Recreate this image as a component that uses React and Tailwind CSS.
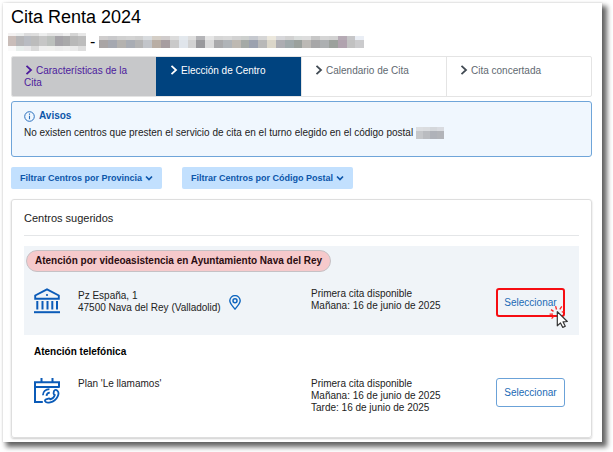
import clsx from 'clsx';

const STEPS = [
	{ label: 'Características de la Cita', state: 'visited' },
	{ label: 'Elección de Centro', state: 'current' },
	{ label: 'Calendario de Cita', state: 'pending' },
	{ label: 'Cita concertada', state: 'pending' },
];

const FILTERS = ['Filtrar Centros por Provincia', 'Filtrar Centros por Código Postal'];

// Pixelated personal data, one colour per block
const NIF_BLOCKS = [
	{
		height: 'h-[3px]',
		colors: ['bg-[#f3f1f1]', 'bg-[#eceeee]', 'bg-[#dcdcdd]', 'bg-[#dedede]', 'bg-[#edeeee]', 'bg-[#e3e3e3]', 'bg-[#e4e4e5]', 'bg-[#eeeeee]', 'bg-[#d5d5d5]', 'bg-[#e7e7e7]'],
	},
	{
		height: 'h-[10px]',
		colors: ['bg-[#c9bdb9]', 'bg-[#b6b6b8]', 'bg-[#b9bcc2]', 'bg-[#bcbcbc]', 'bg-[#c6c6c6]', 'bg-[#bcc0bd]', 'bg-[#a5a3a8]', 'bg-[#a9a9aa]', 'bg-[#b8b8b8]', 'bg-[#bdbdbd]'],
	},
	{
		height: 'h-[5px]',
		colors: ['bg-[#fafafa]', 'bg-[#e8eeec]', 'bg-[#e9e9ea]', 'bg-[#dadada]', 'bg-[#efefef]', 'bg-[#f0f0ee]', 'bg-[#ececec]', 'bg-[#efefef]', 'bg-[#eaeaea]', 'bg-[#dedede]'],
	},
];

const NAME_BLOCKS = [
	{
		height: 'h-1',
		colors: [
			'bg-[#cfcdcd]', 'bg-[#c9c9cb]', 'bg-[#d0d0d0]', 'bg-[#d3d3d3]', 'bg-[#cfcfcf]', 'bg-[#d8dbde]', 'bg-[#d4cec6]', 'bg-[#d0cccc]', 'bg-[#dcdcdc]', 'bg-[#e3e8ed]', 'bg-[#dedede]',
			'bg-[#b5b5b8]', 'bg-[#e6e6e6]', 'bg-[#d6d6d6]', 'bg-[#d9d9d9]', 'bg-[#d2d2d2]', 'bg-[#cdd0ce]', 'bg-[#c6c9cf]', 'bg-[#d6d6d6]', 'bg-[#ece8dd]', 'bg-[#d7d7da]', 'bg-[#d1d1d1]',
			'bg-[#dadddc]', 'bg-[#dddddd]', 'bg-[#c7c7c7]', 'bg-[#d5d5d5]', 'bg-[#d2d2d2]', 'bg-[#b6abb5]', 'bg-[#c6c6c8]', 'bg-[#eaeef5]',
		],
	},
	{
		height: 'h-2',
		colors: [
			'bg-[#a9a5a5]', 'bg-[#a5a8b0]', 'bg-[#b4b2af]', 'bg-[#a9adb4]', 'bg-[#b4b4b4]', 'bg-[#c2c5ca]', 'bg-[#b9aea5]', 'bg-[#a79da0]', 'bg-[#c9c9c9]', 'bg-[#e0e5eb]', 'bg-[#d2d2d2]',
			'bg-[#99999c]', 'bg-[#dadada]', 'bg-[#a9a9ab]', 'bg-[#b0b4b8]', 'bg-[#beb9b2]', 'bg-[#a5aaa6]', 'bg-[#9ba1af]', 'bg-[#b8b8b8]', 'bg-[#dbd6c9]', 'bg-[#adadb2]', 'bg-[#a0a9ab]',
			'bg-[#9ba19d]', 'bg-[#bcb9b5]', 'bg-[#a7a7a8]', 'bg-[#adb0b2]', 'bg-[#9ca19d]', 'bg-[#b0a2ae]', 'bg-[#c1c1c1]', 'bg-[#cbcbcd]',
		],
	},
];

const POSTCODE_BLOCKS = [
	{ height: 'h-1', colors: ['bg-[#dcdee1]', 'bg-[#dadcdf]', 'bg-[#d4d7db]', 'bg-[#d9dbe0]'] },
	{ height: 'h-2', colors: ['bg-[#c5c7ca]', 'bg-[#babcc0]', 'bg-[#afb2b9]', 'bg-[#b2b4b9]'] },
];

function Mosaic({ rows, className }) {
	return (
		<span aria-hidden="true" className={clsx('inline-flex flex-col', className)}>
			{rows.map(({ height, colors }) => (
				<span className="flex" key={height}>
					{colors.map((color, i) => (
						<span className={clsx('block flex-1', height, color)} key={i} />
					))}
				</span>
			))}
		</span>
	);
}

function Chevron({ className, down }) {
	return (
		<svg
			aria-hidden="true"
			className={clsx('inline-block', className)}
			fill="none"
			stroke="currentColor"
			strokeWidth={down ? 1.7 : 1.8}
			viewBox="0 0 8 10">
			<path d={down ? 'M1 3.5 4 6.5 7 3.5' : 'M1.5 .9 6 5 1.5 9.1'} />
		</svg>
	);
}

function InfoIcon() {
	return (
		<svg aria-hidden="true" className="size-[11px]" fill="none" stroke="#2a70bd" viewBox="0 0 11 11">
			<circle cx="5.5" cy="5.5" r="4.8" />
			<path d="M5.5 4.7v3.5M5.5 2.6v1.1" strokeWidth="1.1" />
		</svg>
	);
}

function TownHallIcon() {
	return (
		<svg aria-hidden="true" className="size-[26px]" fill="none" stroke="#0b5bb8" viewBox="0 0 26 26">
			<path d="M1.2 10.8V7.5L13 1.4 24.8 7.5v3.3z" strokeWidth="1.9" />
			<circle cx="13" cy="7" fill="#0b5bb8" r="1.1" stroke="none" />
			<path d="M3.3 13v8.5M8.5 13v8.5M13.5 13v8.5M18.3 13v8.5M23 13v8.5" strokeWidth="2" />
			<path d="M0 24.2h26" strokeWidth="2" />
		</svg>
	);
}

function CalendarPhoneIcon() {
	return (
		<svg aria-hidden="true" className="size-[26px]" fill="none" stroke="#0b5bb8" viewBox="0 0 26 26">
			<path d="M8.8 24H1V4.3h24v5.4M1 9h24" strokeWidth="2" />
			<path d="M7.5 0v4.5M18.5 0v4.5" strokeWidth="2" />
			<path
				d="M20.4 12.4c.9-.7 2.3-.4 3.1.4 1.3 1.2 1.2 3.4.2 5.6-1.3 2.9-4.3 5.3-7.6 6-2.3.5-4.3.1-4.9-1-.5-.9 0-1.7.9-2.1l2.3-.7c.8-.2 1.4 0 1.9.7 2.3-.6 3.9-2.2 4.5-4.3-.9-.4-1.3-1-1.2-1.8.1-1.1.1-2.3.8-2.8z"
				strokeWidth="1.8"
			/>
			<path d="M8.9 17.3c.1-3.6 2.7-6.1 6.5-6.2M12.5 17.9c.1-1.9 1.4-3.2 3.3-3.3" strokeWidth="1.8" />
		</svg>
	);
}

function PinIcon() {
	return (
		<svg className="h-[15px] w-3" fill="none" stroke="#0f66bf" viewBox="0 0 12 15">
			<path d="M6 14.1C3.2 10.7.8 8.5.8 5.8a5.2 5.2 0 0 1 10.4 0c0 2.7-2.4 4.9-5.2 8.3z" strokeWidth="1.4" />
			<circle cx="6" cy="5.8" r="2" strokeWidth="1.5" />
		</svg>
	);
}

// Click burst + arrow pointer laid over the highlighted button
function ClickPointer() {
	return (
		<svg aria-hidden="true" className="pointer-events-none absolute -right-1 -bottom-3 z-10 h-6 w-5" fill="none" viewBox="0 0 20 24">
			<path
				d="M7.5 4.5 6.6 1.2M10.8 4.4 12.8 1.4M4.5 6.4 2 4.6M4 9.2.6 9.2M4.6 11.4 2.6 13.6M12.8 7.2 15.6 6.4"
				stroke="#f22"
				strokeWidth="1.3"
			/>
			<path
				d="M8.3 6.6v14.2l3.2-2.9 2.3 4.5 2.5-1.2-2.2-4.3 4.2-.4z"
				fill="#fff"
				stroke="#333"
				strokeLinejoin="round"
				strokeWidth="1.2"
			/>
		</svg>
	);
}

function Step({ label, state }) {
	return (
		<li
			className={clsx(
				'flex-1 border-r last:border-r-0',
				state === 'visited' && 'border-[#00437f]',
				state !== 'visited' && 'border-[#e4e4e4]',
			)}>
			<a
				aria-current={state === 'current' ? 'step' : undefined}
				className={clsx(
					'block h-full pt-2 pr-4 pl-3 leading-3',
					state === 'visited' && 'bg-[#c7c8ca] text-[#4c1a9c]',
					state === 'current' && 'bg-[#00437f] text-white',
					state === 'pending' && 'text-[#616970]',
				)}
				href="#">
				<Chevron className={clsx('mr-[3px] ml-px h-[10px] w-2 align-[-1px]', state === 'pending' && 'text-[#414a53]')} />
				{label}
			</a>
		</li>
	);
}

function Center({ icon, address, pin, slots, highlighted }) {
	return (
		<div className="grid grid-cols-[44px_233fr_185fr_69px] items-start">
			{icon}
			<div className="flex items-start gap-2">
				<p className={clsx(pin && 'pt-0.5')}>
					{address.map((line) => (
						<span className="block" key={line}>{line}</span>
					))}
				</p>
				{pin && (
					<a aria-label="Ver en el mapa" className="mt-[7px]" href="#">
						<PinIcon />
					</a>
				)}
			</div>
			<p>
				{slots.map((line) => (
					<span className="block" key={line}>{line}</span>
				))}
			</p>
			<div className="relative">
				<button
					className={clsx(
						'h-[29px] w-full rounded-[3px] text-[#2069b5]',
						highlighted ? 'border-2 border-[#f60d12]' : 'border border-[#6ba2d8] bg-white',
					)}
					type="button">
					Seleccionar
				</button>
				{highlighted && <ClickPointer />}
			</div>
		</div>
	);
}

export default function App() {
	return (
		<div className="bg-white pt-[3px] pr-[11px] pb-[11px] pl-[3px] font-['Liberation_Sans',Arial,sans-serif] text-[10px] leading-3 text-[#222]">
			<main className="bg-white px-2 pt-0.5 pb-1 shadow-[4px_4px_5px_1px_rgba(0,0,0,0.6),0_0_2px_rgba(0,0,0,0.15)]">
				<h1 className="text-[18px] leading-6 text-black">Cita Renta 2024</h1>

				<div className="mt-1 flex h-[18px] items-center">
					<Mosaic className="-ml-[3px] w-[78px]" rows={NIF_BLOCKS} />
					<span className="mx-1 text-[16px] text-black">-</span>
					<Mosaic className="w-[265px]" rows={NAME_BLOCKS} />
				</div>

				{/* Wizard steps */}
				<ol className="mr-0.5 mt-[5px] flex h-[41px] overflow-hidden rounded-[2px] border border-[#e4e4e4]">
					{STEPS.map((step) => (
						<Step key={step.label} {...step} />
					))}
				</ol>

				{/* Notice */}
				<section className="mt-1 mr-0.5 h-14 rounded-[3px] border border-[#6fa5d9] bg-[#f0f7fe] px-3 pt-2">
					<h2 className="flex items-center gap-1 font-bold text-[#0c56aa]">
						<InfoIcon />
						Avisos
					</h2>
					<p className="mt-[5px] flex items-center gap-[3px]">
						No existen centros que presten el servicio de cita en el turno elegido en el código postal
						<Mosaic className="w-7" rows={POSTCODE_BLOCKS} />
					</p>
				</section>

				<div className="mt-[10px] flex gap-5">
					{FILTERS.map((label) => (
						<button
							className="flex h-[22px] items-center gap-[3px] rounded-[2px] bg-[#c2e0fe] px-[9px] text-[9px] font-bold text-[#0c56aa]"
							key={label}
							type="button">
							{label}
							<Chevron className="h-[10px] w-2" down />
						</button>
					))}
				</div>

				{/* Suggested centers */}
				<section className="mt-[10px] mr-0.5 rounded-[3px] border border-[#dedede] px-3 pb-[23px] shadow-[0_1px_2px_rgba(0,0,0,0.2)]">
					<h2 className="border-b border-[#e4e6e8] pt-[11px] pb-[10px] text-[11px] leading-[14px]">Centros sugeridos</h2>

					<article className="mt-[10px] bg-[#f0f4f8] pt-1 pr-[14px] pb-[18px]">
						<h3 className="ml-0.5 inline-block rounded-full border border-[#c5c1c5] bg-[#f6c9cb] px-2 py-1 font-bold text-[#2b0c10]">
							Atención por videoasistencia en Ayuntamiento Nava del Rey
						</h3>
						<div className="mt-4 ml-[10px]">
							<Center
								address={['Pz España, 1', '47500 Nava del Rey (Valladolid)']}
								highlighted
								icon={<TownHallIcon />}
								pin
								slots={['Primera cita disponible', 'Mañana: 16 de junio de 2025']}
							/>
						</div>
					</article>

					<article className="pt-[11px] pr-[14px] pl-[10px]">
						<h3 className="font-bold text-black">Atención telefónica</h3>
						<div className="mt-5">
							<Center
								address={["Plan 'Le llamamos'"]}
								icon={<CalendarPhoneIcon />}
								slots={['Primera cita disponible', 'Mañana: 16 de junio de 2025', 'Tarde: 16 de junio de 2025']}
							/>
						</div>
					</article>
				</section>
			</main>
		</div>
	);
}
